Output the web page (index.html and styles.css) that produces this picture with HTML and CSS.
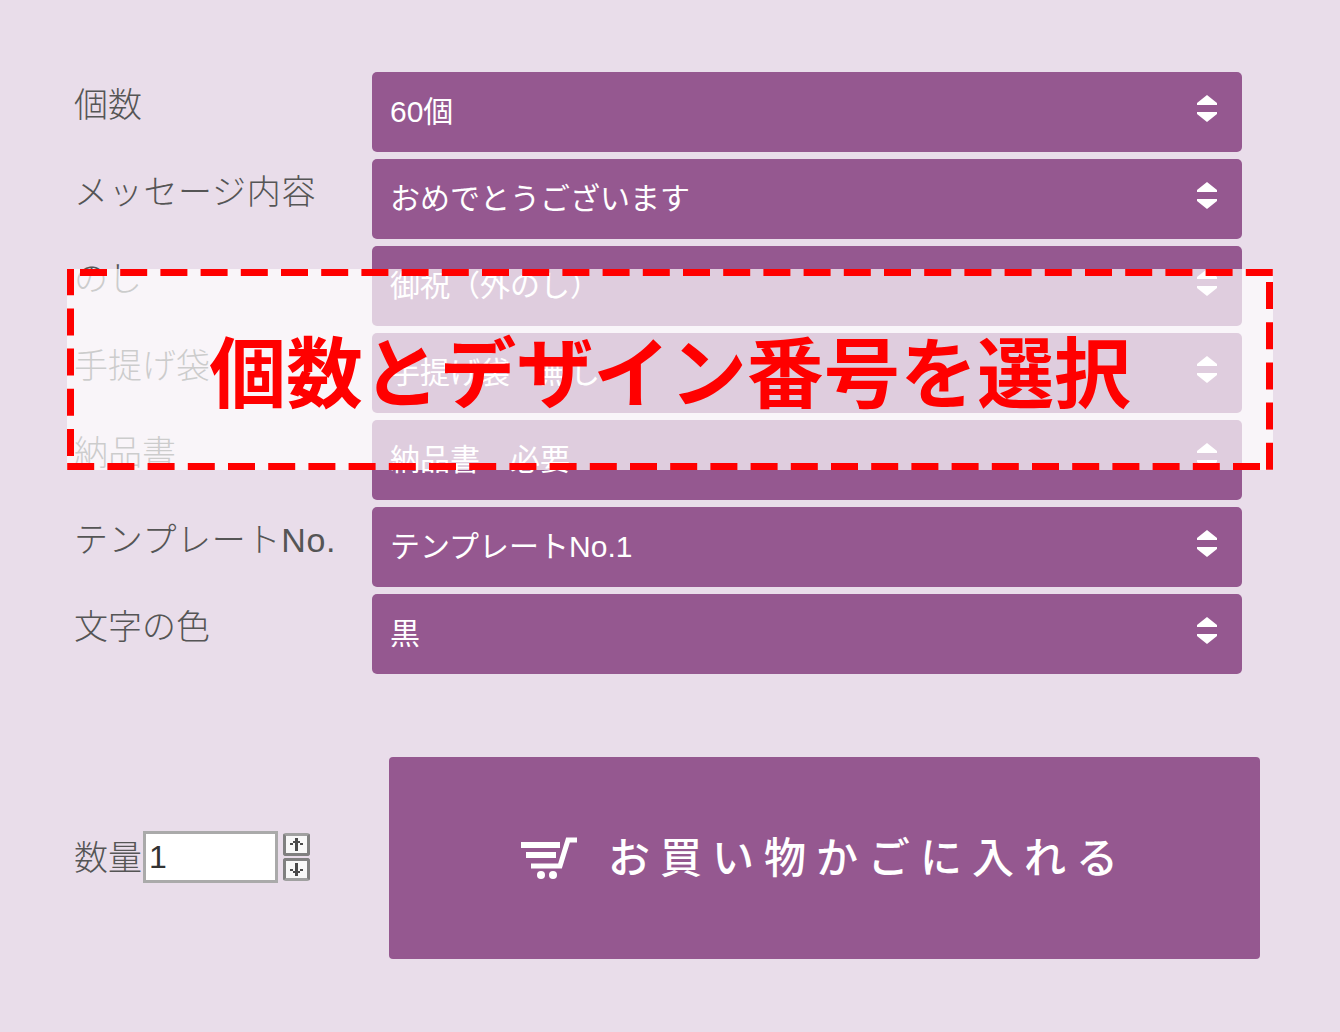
FILE: index.html
```html
<!DOCTYPE html>
<html lang="ja">
<head>
    <meta charset="UTF-8">
    <title>個数とデザイン番号を選択</title>
    <link rel="stylesheet" href="styles.css">
</head>
<body>

<form class="order-form">
    <div class="option-list">
        <div class="option-row">
            <label class="option-label">個数</label>
            <div class="select-box">
                <select><option>60個</option></select>
                <svg class="select-arrows" width="20" height="27" viewBox="0 0 20 27"><path d="M10 0 L20 8 V10 H0 V8 Z M0 17 H20 V19 L10 27 L0 19 Z" fill="#fff"/></svg>
            </div>
        </div>
        <div class="option-row">
            <label class="option-label option-label-wide">メッセージ内容</label>
            <div class="select-box">
                <select><option>おめでとうございます</option></select>
                <svg class="select-arrows" width="20" height="27" viewBox="0 0 20 27"><path d="M10 0 L20 8 V10 H0 V8 Z M0 17 H20 V19 L10 27 L0 19 Z" fill="#fff"/></svg>
            </div>
        </div>
        <div class="option-row">
            <label class="option-label">のし</label>
            <div class="select-box">
                <select><option>御祝（外のし）</option></select>
                <svg class="select-arrows" width="20" height="27" viewBox="0 0 20 27"><path d="M10 0 L20 8 V10 H0 V8 Z M0 17 H20 V19 L10 27 L0 19 Z" fill="#fff"/></svg>
            </div>
        </div>
        <div class="option-row">
            <label class="option-label">手提げ袋</label>
            <div class="select-box">
                <select><option>手提げ袋　無し</option></select>
                <svg class="select-arrows" width="20" height="27" viewBox="0 0 20 27"><path d="M10 0 L20 8 V10 H0 V8 Z M0 17 H20 V19 L10 27 L0 19 Z" fill="#fff"/></svg>
            </div>
        </div>
        <div class="option-row">
            <label class="option-label">納品書</label>
            <div class="select-box">
                <select><option>納品書　必要</option></select>
                <svg class="select-arrows" width="20" height="27" viewBox="0 0 20 27"><path d="M10 0 L20 8 V10 H0 V8 Z M0 17 H20 V19 L10 27 L0 19 Z" fill="#fff"/></svg>
            </div>
        </div>
        <div class="option-row">
            <label class="option-label option-label-wide">テンプレートNo.</label>
            <div class="select-box">
                <select><option>テンプレートNo.1</option></select>
                <svg class="select-arrows" width="20" height="27" viewBox="0 0 20 27"><path d="M10 0 L20 8 V10 H0 V8 Z M0 17 H20 V19 L10 27 L0 19 Z" fill="#fff"/></svg>
            </div>
        </div>
        <div class="option-row">
            <label class="option-label">文字の色</label>
            <div class="select-box">
                <select><option>黒</option></select>
                <svg class="select-arrows" width="20" height="27" viewBox="0 0 20 27"><path d="M10 0 L20 8 V10 H0 V8 Z M0 17 H20 V19 L10 27 L0 19 Z" fill="#fff"/></svg>
            </div>
        </div>
    </div>

    <div class="buy-row">
        <div class="quantity">
            <label class="quantity-label">数量</label>
            <input class="quantity-input" type="text" value="1">
            <div class="spinner">
                <button type="button" class="spinner-btn spinner-up">
                    <svg width="13" height="13" viewBox="0 0 13 13"><path d="M5 13 V5 H3 V7 H0 V5 H3 V3 H5 V0 H8 V3 H10 V5 H13 V7 H10 V5 H8 V13 Z" fill="#4a4a4a"/></svg>
                </button>
                <button type="button" class="spinner-btn spinner-down">
                    <svg width="13" height="13" viewBox="0 0 13 13"><path d="M5 0 V8 H3 V6 H0 V8 H3 V10 H5 V13 H8 V10 H10 V8 H13 V6 H10 V8 H8 V0 Z" fill="#4a4a4a"/></svg>
                </button>
            </div>
        </div>
        <button type="button" class="cart-button">
            <svg class="cart-icon" width="56" height="42" viewBox="0 0 56 42">
                <path d="M0 8 H39 M5 18 H35" fill="none" stroke="#fff" stroke-width="6"/>
                <path d="M10 29 H39 L47 3 H56" fill="none" stroke="#fff" stroke-width="5"/>
                <circle cx="20" cy="38" r="4" fill="#fff"/>
                <circle cx="32" cy="38" r="4" fill="#fff"/>
            </svg>
            <span class="cart-text">お買い物かごに入れる</span>
        </button>
    </div>
</form>

<div class="notice">
    <svg class="notice-border" width="1206" height="201" viewBox="0 0 1206 201">
        <path class="notice-dash" d="M13 3.5 H1206"/>
        <path class="notice-dash" d="M1202.5 13 V201"/>
        <path class="notice-dash" d="M1193 197.5 H0"/>
        <path class="notice-dash" d="M3.5 187 V0"/>
    </svg>
    <p class="notice-text">個数とデザイン番号を選択</p>
</div>

</body>
</html>
```

FILE: styles.css
```css
body {
    margin: 0;
    height: 1032px;
    overflow: hidden;
    background-color: #e9ddea;
    font-family: "Liberation Sans", "Noto Sans CJK JP", sans-serif;
    color: #555;
}
.order-form {
    padding: 72px 98px 0 74px;
    width: 1168px;
}
.option-list {
    display: flex;
    flex-direction: column;
    gap: 7px;
}
.option-row {
    display: flex;
    height: 80px;
}
.option-label {
    width: 298px;
    flex-shrink: 0;
    font-size: 34px;
    font-weight: 300;
    line-height: 66px;
    white-space: nowrap;
}
.option-label-wide {
    letter-spacing: 0.7px;
}
.select-box {
    position: relative;
    flex: 1;
}
.select-box select {
    display: block;
    width: 100%;
    height: 80px;
    padding: 0 0 2px 18px;
    border: 0;
    border-radius: 5px;
    background-color: #955890;
    color: #fff;
    font-family: inherit;
    font-size: 30px;
    appearance: none;
    -webkit-appearance: none;
}
.select-arrows {
    position: absolute;
    top: 23px;
    right: 25px;
}
.buy-row {
    display: flex;
    align-items: center;
    justify-content: space-between;
    margin-top: 83px;
    margin-right: -18px;
}
.quantity {
    display: flex;
    align-items: center;
    margin-top: -2px;
}
.quantity-label {
    padding-bottom: 4px;
    font-size: 34px;
    font-weight: 300;
    white-space: nowrap;
}
.quantity-input {
    width: 126px;
    height: 46px;
    margin-left: 1px;
    padding: 0 0 0 3px;
    border: 3px solid #aaa;
    background-color: #fff;
    color: #333;
    font-family: "Liberation Sans", sans-serif;
    font-size: 32px;
}
.spinner {
    display: flex;
    flex-direction: column;
    gap: 2px;
    margin-left: 5px;
}
.spinner-btn {
    display: flex;
    align-items: center;
    justify-content: center;
    box-sizing: border-box;
    width: 27px;
    height: 23px;
    padding: 0;
    border: 3px solid #808080;
    border-radius: 3px;
    background-color: #f8f8f8;
}
.spinner-up {
    border-top-color: #a0a0a0;
}
.spinner-down {
    border-bottom-color: #a0a0a0;
}
.cart-button {
    display: flex;
    align-items: center;
    justify-content: center;
    gap: 31px;
    width: 871px;
    height: 202px;
    padding: 0;
    border: 0;
    border-radius: 4px;
    background-color: #955890;
    color: #fff;
    font-family: inherit;
    cursor: pointer;
}
.cart-text {
    padding-bottom: 8px;
    font-size: 42px;
    font-weight: 500;
    letter-spacing: 10px;
    white-space: nowrap;
}
/* banner over the form */
.notice {
    position: absolute;
    left: 67px;
    top: 269px;
    width: 1206px;
    height: 201px;
    display: flex;
    align-items: center;
    justify-content: center;
    background-color: rgba(255, 255, 255, 0.7);
}
.notice-border {
    position: absolute;
    left: 0;
    top: 0;
}
.notice-dash {
    fill: none;
    stroke: #f00;
    stroke-width: 7;
    stroke-dasharray: 27 13.2;
}
.notice-text {
    margin: 0;
    color: #f00;
    font-family: "Noto Sans CJK JP", sans-serif;
    font-size: 76.8px;
    font-weight: 700;
    line-height: 1;
    white-space: nowrap;
}
```
